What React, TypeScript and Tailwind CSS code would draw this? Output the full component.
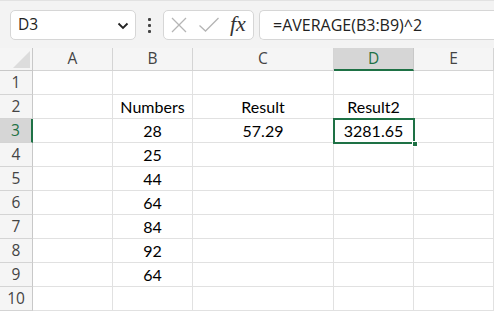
import React from 'react';

const COLS = [
  { id: 'A', w: 'w-[80px]' },
  { id: 'B', w: 'w-[80px]' },
  { id: 'C', w: 'w-[141px]' },
  { id: 'D', w: 'w-[80px]' },
  { id: 'E', w: 'w-[80px]' },
];

const DATA: Record<number, Record<string, string>> = {
  2: { B: 'Numbers', C: 'Result', D: 'Result2' },
  3: { B: '28', C: '57.29', D: '3281.65' },
  4: { B: '25' },
  5: { B: '44' },
  6: { B: '64' },
  7: { B: '84' },
  8: { B: '92' },
  9: { B: '64' },
};

const UI_FONT = { fontFamily: '"Open Sans", "Noto Sans", sans-serif' };
const CELL_FONT = { fontFamily: 'Lato, "Liberation Sans", sans-serif' };

function FormulaBar() {
  return (
    <div className="h-12 bg-[#f3f3f3] border-t border-[#e2e2e2] flex items-start pt-[9px] pl-[10px]" style={UI_FONT}>
      {/* Name box */}
      <div className="w-[126px] h-[30px] bg-white border border-[#d6d6d6] rounded-[5px] flex items-center justify-between pl-[7px] pr-[6px]">
        <span className="text-[15.5px] text-[#222]">D3</span>
        <svg width="12" height="8" viewBox="0 0 12 8" className="mt-[1px]">
          <path d="M1.5 1.5 L6 6 L10.5 1.5" fill="none" stroke="#222" strokeWidth="1.8" />
        </svg>
      </div>
      {/* vertical dots */}
      <div className="w-[27px] h-[30px] flex flex-col items-center justify-center gap-[3px]">
        <span className="w-[3px] h-[3px] bg-[#444] rounded-[1px]" />
        <span className="w-[3px] h-[3px] bg-[#444] rounded-[1px]" />
        <span className="w-[3px] h-[3px] bg-[#444] rounded-[1px]" />
      </div>
      {/* cancel / enter / fx */}
      <div className="w-[91px] h-[30px] bg-white border border-[#d6d6d6] rounded-[5px] flex items-center pl-[6px]">
        <svg width="18" height="18" viewBox="0 0 18 18">
          <path d="M2 2 L16 16 M16 2 L2 16" stroke="#b5b5b5" strokeWidth="1.3" fill="none" />
        </svg>
        <svg width="22" height="18" viewBox="0 0 22 18" className="ml-[10px]">
          <path d="M1.5 9.5 L7.5 15 L20.5 2" stroke="#b5b5b5" strokeWidth="1.3" fill="none" />
        </svg>
        <span
          className="ml-[10px] text-[22px] italic text-[#333] leading-none -mt-[3px]"
          style={{ fontFamily: '"Liberation Serif", "DejaVu Serif", serif' }}
        >
          fx
        </span>
      </div>
      {/* formula box */}
      <div className="ml-[5px] flex-1 h-[30px] bg-white border border-[#d6d6d6] border-r-0 rounded-l-[5px] flex items-center pl-[13px]">
        <span className="text-[16px] text-[#222]">=AVERAGE(B3:B9)^2</span>
      </div>
    </div>
  );
}

function Grid() {
  const rows = Array.from({ length: 10 }, (_, i) => i + 1);
  return (
    <div className="relative bg-white" style={CELL_FONT}>
      {/* Column headers */}
      <div className="flex h-[23px] bg-[#f5f5f5]" style={UI_FONT}>
        <div className="w-[33px] border-r border-b border-[#c8c8c8] relative">
          <div
            className="absolute right-[2px] bottom-[2px] w-[17px] h-[17px] bg-[#dcdcdc]"
            style={{ clipPath: 'polygon(100% 0, 100% 100%, 0 100%)' }}
          />
        </div>
        {COLS.map((c) => {
          const sel = c.id === 'D';
          return (
            <div
              key={c.id}
              className={`${c.w} flex items-center justify-center text-[15.5px] border-r ${
                sel
                  ? 'bg-[#d6d6d6] border-b-2 border-b-[#1e7145] border-r-[#c8c8c8] text-[#1e7145]'
                  : 'border-b border-[#d4d4d4] text-[#444]'
              }`}
            >
              {c.id}
            </div>
          );
        })}
      </div>
      {rows.map((r) => {
        const sel = r === 3;
        return (
          <div key={r} className="flex h-6">
            <div
              className={`w-[33px] flex items-center justify-center text-[15.5px] border-b border-[#d4d4d4] ${
                sel
                  ? 'bg-[#d6d6d6] border-r-2 border-r-[#1e7145] text-[#1e7145]'
                  : 'bg-[#f5f5f5] border-r border-r-[#c8c8c8] text-[#444]'
              }`}
              style={UI_FONT}
            >
              {r}
            </div>
            {COLS.map((c) => (
              <div
                key={c.id}
                className={`${c.w} flex items-center justify-center border-r border-b border-[#e1e1e1] text-[16px] text-black`}
              >
                {DATA[r]?.[c.id] ?? ''}
              </div>
            ))}
          </div>
        );
      })}
      {/* Active cell D3 */}
      <div className="absolute left-[333px] top-[70px] w-[82px] h-[26px] border-2 border-[#1e7145] pointer-events-none" />
      <div className="absolute left-[412px] top-[93px] w-[6px] h-[6px] bg-[#1e7145] border border-white" />
    </div>
  );
}

export default function App() {
  return (
    <div className="w-[494px] h-[313px] overflow-hidden bg-white">
      <FormulaBar />
      <Grid />
    </div>
  );
}
